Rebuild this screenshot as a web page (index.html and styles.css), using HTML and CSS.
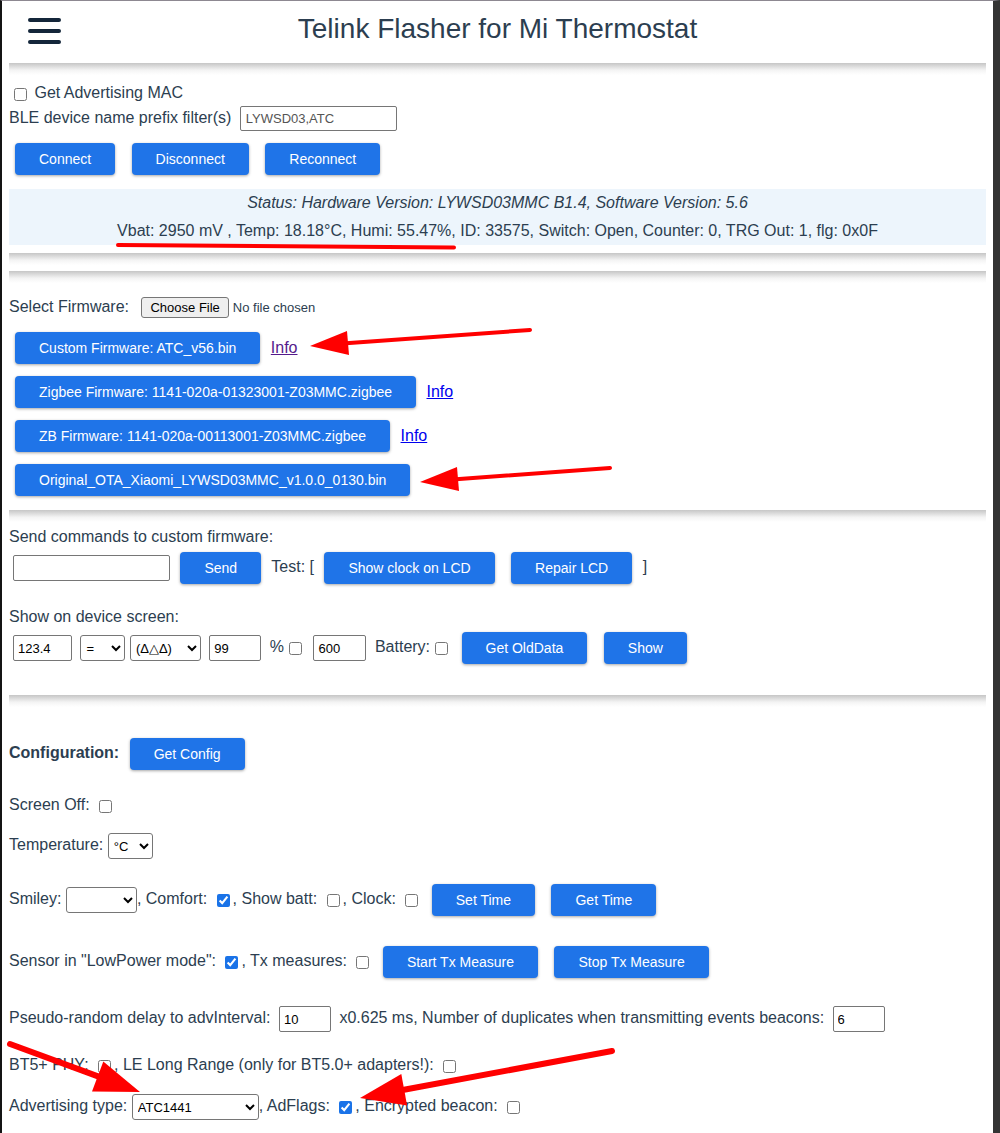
FILE: index.html
```html
<!DOCTYPE html>
<html lang="en">
<head>
<meta charset="utf-8">
<title>Telink Flasher for Mi Thermostat</title>
<link rel="stylesheet" href="styles.css">
</head>
<body>
<div class="page">
  <header class="topbar">
    <div class="burger"><span></span><span></span><span></span></div>
    <h1 class="title">Telink Flasher for Mi Thermostat</h1>
    <div></div>
  </header>
  <div class="sep"></div>

  <div class="row r-mac"><div class="ln"><input type="checkbox" class="cb"> Get Advertising MAC</div></div>
  <div class="row r-filter"><div class="ln">BLE device name prefix filter(s) <input type="text" class="txt w157 dim" value="LYWSD03,ATC"></div></div>
  <div class="row r-btns"><div class="ln"><button class="btn">Connect</button> <button class="btn">Disconnect</button> <button class="btn">Reconnect</button></div></div>

  <div class="status">
    <div class="st-title">Status: Hardware Version: LYWSD03MMC B1.4, Software Version: 5.6</div>
    <div>Vbat: 2950 mV , Temp: 18.18°C, Humi: 55.47%, ID: 33575, Switch: Open, Counter: 0, TRG Out: 1, flg: 0x0F</div>
  </div>

  <div class="sep sep-a"></div>
  <div class="sep sep-b"></div>

  <div class="row r-select"><div class="ln">Select Firmware: <input type="file" class="file"></div></div>
  <div class="fw-list">
    <div class="row r-fw"><div class="ln"><button class="btn">Custom Firmware: ATC_v56.bin</button> <a href="#" class="visited">Info</a></div></div>
    <div class="row r-fw"><div class="ln"><button class="btn">Zigbee Firmware: 1141-020a-01323001-Z03MMC.zigbee</button> <a href="#" class="link">Info</a></div></div>
    <div class="row r-fw"><div class="ln"><button class="btn">ZB Firmware: 1141-020a-00113001-Z03MMC.zigbee</button> <a href="#" class="link">Info</a></div></div>
    <div class="row r-fw"><div class="ln"><button class="btn">Original_OTA_Xiaomi_LYWSD03MMC_v1.0.0_0130.bin</button></div></div>
  </div>

  <div class="sep sep-c"></div>

  <div class="row r-label r-sendlbl"><div class="ln">Send commands to custom firmware:</div></div>
  <div class="row r-tall r-send"><div class="ln"><input type="text" class="txt w157 cmd"> <button class="btn">Send</button> Test: [ <button class="btn">Show clock on LCD</button> <button class="btn">Repair LCD</button> ]</div></div>

  <div class="row r-label r-showlbl"><div class="ln">Show on device screen:</div></div>
  <div class="row r-tall r-show"><div class="ln"><input type="text" class="txt w59" value="123.4"> <select class="sel w45"><option>=</option></select> <select class="sel w71"><option>(Δ△Δ)</option></select> <input type="text" class="txt w52" value="99"> %<input type="checkbox" class="cb"> <input type="text" class="txt w53" value="600"> Battery:<input type="checkbox" class="cb"> <button class="btn">Get OldData</button> <button class="btn">Show</button></div></div>

  <div class="sep sep-d"></div>

  <div class="row r-tall r-cfg"><div class="ln"><b class="strong">Configuration:</b> <button class="btn">Get Config</button></div></div>
  <div class="row r-mid r-scr"><div class="ln">Screen Off: <input type="checkbox" class="cb"></div></div>
  <div class="row r-mid r-temp"><div class="ln">Temperature: <select class="sel w45"><option>°C</option><option>°F</option></select></div></div>
  <div class="row r-tall r-smiley"><div class="ln">Smiley: <select class="sel w71"><option></option></select>, Comfort: <input type="checkbox" class="cb" checked>, Show batt: <input type="checkbox" class="cb">, Clock: <input type="checkbox" class="cb"> <button class="btn">Set Time</button> <button class="btn">Get Time</button></div></div>
  <div class="row r-tall r-sensor"><div class="ln">Sensor in "LowPower mode": <input type="checkbox" class="cb" checked>, Tx measures: <input type="checkbox" class="cb"> <button class="btn">Start Tx Measure</button> <button class="btn">Stop Tx Measure</button></div></div>
  <div class="row r-mid r-pseudo"><div class="ln">Pseudo-random delay to advInterval: <input type="text" class="txt w52" value="10"> x0.625 ms, Number of duplicates when transmitting events beacons: <input type="text" class="txt w52" value="6"></div></div>
  <div class="row r-mid r-bt5"><div class="ln">BT5+ PHY: <input type="checkbox" class="cb">, LE Long Range (only for BT5.0+ adapters!): <input type="checkbox" class="cb"></div></div>
  <div class="row r-mid r-adv"><div class="ln">Advertising type: <select class="sel w127"><option>ATC1441</option></select>, AdFlags: <input type="checkbox" class="cb" checked>, Encrypted beacon: <input type="checkbox" class="cb"></div></div>
</div>

<svg class="marks" width="1000" height="1133" viewBox="0 0 1000 1133" aria-hidden="true">
  <g stroke="#ff0000" fill="none" stroke-linecap="round">
    <path d="M118 245 L454 247.5" stroke-width="4"/>
    <path d="M530 330 L346 343.3" stroke-width="4"/>
    <path d="M610 468 L456 479.3" stroke-width="4"/>
    <path d="M10 1044 L98 1076.4" stroke-width="6"/>
    <path d="M612 1051 L404 1089.7" stroke-width="6"/>
  </g>
  <g fill="#ff0000">
    <polygon points="310,346 347,331 349,355"/>
    <polygon points="420,482 457,467 459,491"/>
    <polygon points="140,1092 92,1091.4 103.3,1061.4"/>
    <polygon points="360,1098 401.3,1074 407.1,1105.4"/>
  </g>
</svg>
</body>
</html>
```

FILE: styles.css
```css
* { box-sizing: border-box; }

html { background: #fff; }

body {
  margin: 0;
  min-height: 1133px;
  border-top: 1px solid #8d8891;
  border-left: 2px solid #141414;
  border-right: 7px solid #343434;
  font-family: "Liberation Sans", Arial, sans-serif;
  font-size: 16px;
  color: #2c3e50;
  overflow: hidden;
}

.page { padding: 0 7px; }

/* header */
.topbar {
  display: grid;
  grid-template-columns: 1fr auto 1fr;
  height: 62px;
}
.burger {
  display: flex;
  flex-direction: column;
  gap: 7px;
  width: 33px;
  margin: 17px 0 0 19px;
}
.burger span {
  display: block;
  height: 4px;
  border-radius: 2px;
  background: #14263a;
}
.title {
  margin: 0;
  padding-top: 1px;
  font-size: 28px;
  font-weight: normal;
  line-height: 54px;
  color: #2c3e50;
  white-space: nowrap;
}

.sep {
  height: 12px;
  background: linear-gradient(#c6c6c6, #f4f4f4 60%, #fff);
}

/* rows */
.row { display: flex; align-items: center; }
.ln { white-space: nowrap; }

.r-mac { margin-top: 10px; height: 18px; }
.r-filter { margin-top: 2px; height: 26px; }
.r-btns { margin-top: 6px; height: 44px; }

.status {
  margin-top: 8px;
  height: 56px;
  background: #edf5fc;
  text-align: center;
  line-height: 28px;
}
.st-title { font-style: italic; }

.sep-a { margin-top: 8px; }
.sep-b { margin-top: 6px; }

.r-select { margin-top: 13px; height: 22px; }
.fw-list { margin-top: 8px; }
.r-fw { height: 44px; }

.sep-c { margin-top: 8px; }

.r-label { height: 18px; }
.r-tall { height: 44px; }
.r-mid { height: 26px; }

.r-sendlbl { margin-top: 6px; }
.r-send { margin-top: 0; }
.r-showlbl { margin-top: 18px; }
.r-show { margin-top: 0; }

.sep-d { margin-top: 25px; }

.r-cfg { margin-top: 25px; }
.r-scr { margin-top: 17px; }
.r-temp { margin-top: 14px; }
.r-smiley { margin-top: 19px; }
.r-sensor { margin-top: 18px; }
.r-pseudo { margin-top: 22px; }
.r-bt5 { margin-top: 21px; }
.r-adv { margin-top: 15px; }

.strong { font-weight: bold; }

/* controls */
.btn {
  display: inline-block;
  vertical-align: middle;
  height: 32px;
  margin: 6px;
  padding: 0 24px;
  border: none;
  border-radius: 4px;
  background: #1f74e8;
  color: #fff;
  font-family: "Liberation Sans", Arial, sans-serif;
  font-size: 14px;
  box-shadow: 0 1px 3px rgba(0, 0, 0, 0.35);
}

.txt {
  vertical-align: middle;
  height: 26px;
  margin: 0 4px;
  padding: 0 4px;
  border: 1px solid #767676;
  border-radius: 2px;
  background: #fff;
  color: #000;
  font-family: "Liberation Sans", Arial, sans-serif;
  font-size: 13px;
}
.r-filter .txt { height: 25px; }
.dim { color: #555; padding-left: 5px; }
.cmd { margin-right: 0; }

.w157 { width: 157px; }
.w59 { width: 59px; }
.w52 { width: 52px; }
.w53 { width: 53px; }
.w45 { width: 45px; }
.w71 { width: 71px; }
.w127 { width: 127px; }

.sel {
  vertical-align: middle;
  height: 26px;
  margin: 0;
  padding: 0 1px;
  border: 1px solid #767676;
  border-radius: 3px;
  background: #fff;
  color: #000;
  font-family: "Liberation Sans", Arial, sans-serif;
  font-size: 13px;
}

.cb {
  vertical-align: middle;
  width: 13px;
  height: 13px;
  margin: 3px 3px 3px 5px;
  accent-color: #1a73e8;
}

.file {
  vertical-align: middle;
  margin-left: 8px;
  color: #2c3e50;
  font-family: "Liberation Sans", Arial, sans-serif;
  font-size: 13px;
}
.file::file-selector-button {
  height: 21px;
  margin-right: 4px;
  padding: 0 8px;
  border: 1px solid #767676;
  border-radius: 3px;
  background: #efefef;
  color: #000;
  font-family: "Liberation Sans", Arial, sans-serif;
  font-size: 13px;
}

.visited, .link { text-decoration: underline; vertical-align: middle; }
.visited { color: #551a8b; }
.link { color: #0000ee; }

/* screenshot annotations drawn over the page */
.marks {
  position: fixed;
  top: 0;
  left: 0;
  pointer-events: none;
}
```
